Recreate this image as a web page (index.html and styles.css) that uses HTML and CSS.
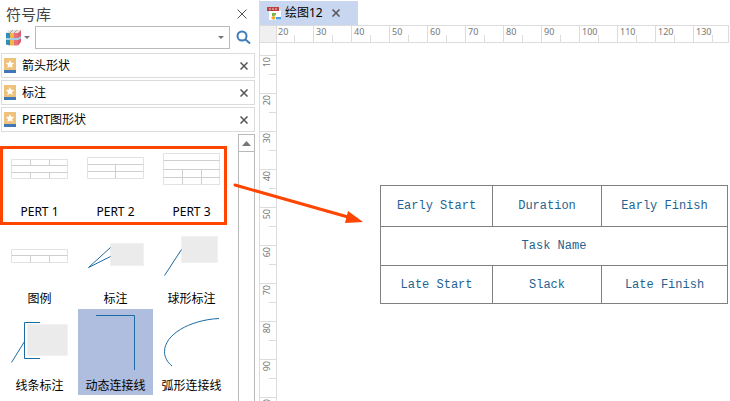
FILE: index.html
```html
<!DOCTYPE html>
<html lang="zh-CN">
<head>
<meta charset="UTF-8">
<meta name="viewport" content="width=device-width, initial-scale=1.0">
<title>绘图12</title>
<link rel="stylesheet" href="styles.css">
</head>
<body>
<div class="app">
  <aside class="panel">
    <header class="panel-head">
      <h1>符号库</h1>
      <button class="close big" aria-label="关闭"><svg width="10" height="10" viewBox="0 0 10 10"><path d="M0.5 0.5L9.5 9.5M9.5 0.5L0.5 9.5"/></svg></button>
    </header>
    <form class="search">
      <button type="button" class="books" aria-label="符号库菜单">
        <svg width="15" height="16" viewBox="0 0 15 16">
          <path d="M0 3L3 0H15L12 3z" fill="#e8e2de"/>
          <path d="M4 3L7 0M8 3L11 0" stroke="#a9a29e" fill="none"/>
          <path d="M0 3h4v12.5l-4-1z" fill="#2f8fb5"/>
          <path d="M4 3h4v12.5h-4z" fill="#f0b74c"/>
          <path d="M8 3h4v12.5h-4z" fill="#e8717c"/>
          <path d="M12 3l3-3v12l-3 3.5z" fill="#dd5f6c"/>
          <path d="M0 9H12L15 7" stroke="#a5cfe6" stroke-width="2" fill="none"/>
        </svg>
        <span class="caret"></span>
      </button>
      <div class="combo">
        <input type="text" aria-label="搜索符号">
        <button type="button" aria-label="展开"><span class="caret"></span></button>
      </div>
      <button type="button" class="find" aria-label="搜索"><svg width="15" height="15" viewBox="0 0 15 15"><circle cx="6" cy="6" r="4.5"/><path d="M9.5 9.5L14 13.5"/></svg></button>
    </form>
    <ul class="libs">
      <li>
        <svg class="star" width="12" height="15" viewBox="0 0 12 15"><path d="M0 0h12v12h-12z" fill="#eec27b"/><path d="M0 12h12v3h-12z" fill="#3f78b5"/><path d="M6 2l1.2 2.8 3 .3-2.2 2 .6 3L6 8.5 3.4 10.1l.6-3-2.2-2 3-.3z" fill="#fff"/></svg>
        <span>箭头形状</span>
        <button class="close" aria-label="关闭"><svg width="8" height="8" viewBox="0 0 8 8"><path d="M0.5 0.5L7.5 7.5M7.5 0.5L0.5 7.5"/></svg></button>
      </li>
      <li>
        <svg class="star" width="12" height="15" viewBox="0 0 12 15"><path d="M0 0h12v12h-12z" fill="#eec27b"/><path d="M0 12h12v3h-12z" fill="#3f78b5"/><path d="M6 2l1.2 2.8 3 .3-2.2 2 .6 3L6 8.5 3.4 10.1l.6-3-2.2-2 3-.3z" fill="#fff"/></svg>
        <span>标注</span>
        <button class="close" aria-label="关闭"><svg width="8" height="8" viewBox="0 0 8 8"><path d="M0.5 0.5L7.5 7.5M7.5 0.5L0.5 7.5"/></svg></button>
      </li>
      <li>
        <svg class="star" width="12" height="15" viewBox="0 0 12 15"><path d="M0 0h12v12h-12z" fill="#eec27b"/><path d="M0 12h12v3h-12z" fill="#3f78b5"/><path d="M6 2l1.2 2.8 3 .3-2.2 2 .6 3L6 8.5 3.4 10.1l.6-3-2.2-2 3-.3z" fill="#fff"/></svg>
        <span>PERT图形状</span>
        <button class="close" aria-label="关闭"><svg width="8" height="8" viewBox="0 0 8 8"><path d="M0.5 0.5L7.5 7.5M7.5 0.5L0.5 7.5"/></svg></button>
      </li>
    </ul>
    <div class="shapes">
      <div class="shape-grid">
        <button class="shape">
          <svg viewBox="0 0 75 68"><path class="frame" d="M9.5 24.5h56v19h-56z"/><path class="rule" d="M9.5 30.5h56M9.5 37.5h56M28.5 24.5v6M47.5 24.5v6M28.5 37.5v6M47.5 37.5v6"/></svg>
          <span>PERT 1</span>
        </button>
        <button class="shape">
          <svg viewBox="0 0 75 68"><path class="frame" d="M9.5 22.5h56v21h-56z"/><path class="rule" d="M9.5 29.5h56M9.5 36.5h56M37.5 29.5v14"/></svg>
          <span>PERT 2</span>
        </button>
        <button class="shape">
          <svg viewBox="0 0 75 68"><path class="frame" d="M9.5 18.5h56v31h-56z"/><path class="rule" d="M9.5 25.5h56M9.5 34.5h56M9.5 42.5h56M28.5 34.5v15M47.5 34.5v15"/></svg>
          <span>PERT 3</span>
        </button>
        <button class="shape">
          <svg viewBox="0 0 75 68"><path class="frame" d="M9.5 27.5h56v13h-56z"/><path class="rule" d="M9.5 33.5h56M28.5 33.5v7M47.5 33.5v7"/></svg>
          <span>图例</span>
        </button>
        <button class="shape">
          <svg viewBox="0 0 75 68"><path class="box" d="M32.5 21.5h33v22h-33z"/><path class="line" d="M32.5 25.5L10.5 45.5L32.5 34.5"/></svg>
          <span>标注</span>
        </button>
        <button class="shape">
          <svg viewBox="0 0 75 68"><path class="box" d="M27.5 14.5h36v26h-36z"/><path class="line" d="M27.5 27.5L10.5 53.5"/></svg>
          <span>球形标注</span>
        </button>
        <button class="shape">
          <svg viewBox="0 0 75 68"><path class="box" d="M25.5 15.5h40v31h-40z"/><path class="line" d="M38 13.5H22.5V49.5H38M22.5 32.5L9.5 53.5"/></svg>
          <span>线条标注</span>
        </button>
        <button class="shape selected">
          <svg viewBox="0 0 75 68"><path class="line" d="M18 6.5H56.5V61"/></svg>
          <span>动态连接线</span>
        </button>
        <button class="shape">
          <svg viewBox="0 0 75 68"><path class="line" d="M65 9.5C35 11 10.5 26 10.5 42.5C10.5 48 13 53 18 57"/></svg>
          <span>弧形连接线</span>
        </button>
      </div>
      <div class="scroll"><button aria-label="向上滚动"><svg width="9" height="5" viewBox="0 0 9 5"><path d="M0 5L4.5 0L9 5z" fill="#777"/></svg></button></div>
    </div>
  </aside>

  <main class="work">
    <nav class="tabs">
      <div class="tab">
        <svg width="15" height="15" viewBox="0 0 15 15">
          <path d="M2 2h9l3 3v9h-12z" fill="#fff"/>
          <path d="M11 2v3h3z" fill="#dcdcdc"/>
          <path d="M0 1h12v4h-12z" fill="#b8433f"/>
          <path d="M2 3h2M5 3h2M8 3h2" stroke="#f3cfcd"/>
          <path d="M5 7h4v2l-2 1h-2z" fill="#7cb342"/>
          <path d="M6.5 9.5l2.5 2.5-2.5 2-2.5-2z" fill="#f5a623"/>
          <path d="M9 11h5v2.5h-5z" fill="#4aa0f0"/>
        </svg>
        <a href="#drawing">绘图12</a>
        <button class="close" aria-label="关闭"><svg width="8" height="8" viewBox="0 0 8 8"><path d="M0.5 0.5L7.5 7.5M7.5 0.5L0.5 7.5"/></svg></button>
      </div>
    </nav>
    <div class="ruler-x">
      <div class="corner"></div>
      <div class="marks">
        <span>20</span><span>30</span><span>40</span><span>50</span><span>60</span><span>70</span><span>80</span><span>90</span><span>100</span><span>110</span><span>120</span><span>130</span>
      </div>
    </div>
    <div class="sheet">
      <div class="ruler-y">
        <div><span>10</span></div><div><span>20</span></div><div><span>30</span></div><div><span>40</span></div><div><span>50</span></div><div><span>60</span></div><div><span>70</span></div><div><span>80</span></div><div><span>90</span></div><div><span>100</span></div>
      </div>
      <div class="canvas" id="drawing">
        <table class="pert">
          <colgroup><col class="c1"><col class="c2"><col class="c3"></colgroup>
          <tr><td>Early Start</td><td>Duration</td><td>Early Finish</td></tr>
          <tr><td colspan="3">Task Name</td></tr>
          <tr><td>Late Start</td><td>Slack</td><td>Late Finish</td></tr>
        </table>
      </div>
    </div>
  </main>

  <div class="highlight"></div>
  <svg class="arrow" width="132" height="44" viewBox="0 0 132 44"><path d="M3 4L116 36" stroke="#ff4500" stroke-width="3" stroke-linecap="round"/><path d="M116 30L131 41L113 42z" fill="#ff4500"/></svg>
</div>
</body>
</html>
```
FILE: styles.css
```css
* {
  box-sizing: border-box;
}
body {
  margin: 0;
  background: #fff;
  color: #000;
  font-family: "Noto Sans", "Noto Sans CJK SC", sans-serif;
  font-size: 12px;
  line-height: 18px;
}
button {
  display: flex;
  align-items: center;
  justify-content: center;
  padding: 0;
  border: none;
  background: none;
  color: inherit;
  font: inherit;
  cursor: pointer;
}
.app {
  position: relative;
  display: flex;
  height: 100vh;
  overflow: hidden;
}

/* symbol library */
.panel {
  display: flex;
  flex-direction: column;
  flex: 0 0 260px;
  min-width: 0;
  border-right: 1px solid #dcdcdc;
}
.panel-head {
  display: flex;
  align-items: center;
  justify-content: space-between;
  height: 26px;
  padding: 2px 12px 0 6px;
}
h1 {
  margin: 0;
  color: #444;
  font-size: 15px;
  font-weight: normal;
}
.close path {
  fill: none;
  stroke: #555;
  stroke-width: 1.5;
}
.close.big path {
  stroke-width: 1;
}
.search {
  display: flex;
  align-items: center;
  height: 23px;
  padding: 0 8px 0 6px;
}
.books {
  gap: 3px;
  width: 29px;
  justify-content: flex-start;
}
.caret {
  border: 3px solid transparent;
  border-top-color: #777;
  border-bottom: none;
}
.combo {
  display: flex;
  flex: 1;
  min-width: 0;
  height: 23px;
  border: 1px solid #b9b9b9;
}
.combo input {
  flex: 1;
  min-width: 0;
  padding: 0 4px;
  border: none;
  outline: none;
  font: inherit;
}
.combo button {
  width: 16px;
}
.find {
  width: 21px;
  justify-content: flex-end;
}
.find svg {
  fill: none;
  stroke: #3f7cbc;
  stroke-width: 2;
}
.libs {
  display: flex;
  flex-direction: column;
  gap: 2px;
  margin: 4px 4px 2px 1px;
  padding: 0;
  list-style: none;
}
.libs li {
  display: flex;
  align-items: center;
  height: 25px;
  padding: 0 6px 0 2px;
  border: 1px solid #dcdcdc;
}
.libs span {
  flex: 1;
  padding-left: 6px;
}

.shapes {
  display: flex;
  flex: 1;
  min-height: 0;
  justify-content: space-between;
  padding-right: 4px;
}
.shape-grid {
  display: grid;
  grid-template-columns: repeat(3, 75px);
  grid-auto-rows: 86px;
  align-content: start;
  gap: 1px;
  padding: 1px 0 0 2px;
}
.shape {
  flex-direction: column;
  justify-content: flex-start;
  white-space: nowrap;
}
.shape svg {
  flex: none;
  width: 75px;
  height: 68px;
  fill: none;
}
.selected {
  background: #afbddf;
}
.frame {
  stroke: #e2e2e2;
}
.rule {
  stroke: #cfcfcf;
}
.box {
  fill: #ebebeb;
  stroke: #f1f1f1;
}
.line {
  stroke: #1b6ca3;
}
.scroll {
  width: 17px;
  border: 1px solid #b9b9b9;
  border-bottom: none;
}
.scroll button {
  width: 100%;
  height: 17px;
  border-bottom: 1px solid #b9b9b9;
}

/* drawing area */
.work {
  display: flex;
  flex: 1;
  flex-direction: column;
  min-width: 0;
}
.tabs {
  display: flex;
  height: 25px;
  padding-top: 1px;
}
.tab {
  display: flex;
  align-items: center;
  padding: 0 18px 0 7px;
  background: #c8d7ef;
}
.tab a {
  padding: 0 9px 0 3px;
  color: #000;
  text-decoration: none;
}
.ruler-x {
  display: flex;
  height: 18px;
  margin-right: 1px;
  border: 1px solid #dcdcdc;
  border-left: none;
  color: #777;
  font-size: 9px;
  line-height: 11px;
}
.corner {
  flex: 0 0 17px;
  border-right: 1px solid #dcdcdc;
  background: #f0f0f0;
}
.marks {
  display: flex;
  flex: 1;
  overflow: hidden;
}
.marks span {
  flex: 0 0 38px;
  padding-left: 2px;
  border-left: 1px solid #dcdcdc;
  background: linear-gradient(#dcdcdc, #dcdcdc) 18px 100% / 1px 7px no-repeat;
}
.marks span:first-child {
  flex-basis: 36px;
  padding-left: 1px;
  border-left: none;
  background-position-x: 17px;
}
.sheet {
  display: flex;
  flex: 1;
  min-height: 0;
}
.ruler-y {
  flex: 0 0 17px;
  padding-top: 12px;
  overflow: hidden;
  border-right: 1px solid #dcdcdc;
  color: #777;
  font-size: 9px;
  line-height: 11px;
}
.ruler-y div {
  height: 38px;
  padding: 1px 0 0 1px;
  border-top: 1px solid #dcdcdc;
  background: linear-gradient(#dcdcdc, #dcdcdc) 100% 18px / 7px 1px no-repeat;
}
.ruler-y span {
  display: block;
  width: 11px;
  writing-mode: vertical-rl;
  transform: rotate(180deg);
}
.canvas {
  flex: 1;
  padding: 142px 0 0 103px;
}
.pert {
  table-layout: fixed;
  width: 348px;
  border-collapse: collapse;
  color: #1f6391;
  font-family: "Liberation Mono", monospace;
  text-align: center;
}
.pert td {
  height: 39px;
  padding: 0;
  border: 1px solid #808080;
}
.pert tr:first-child td {
  height: 41px;
}
.pert tr:last-child td {
  height: 38px;
}
.c1 {
  width: 112px;
}
.c2 {
  width: 109px;
}

/* callout over the PERT shapes */
.highlight {
  position: absolute;
  top: 146px;
  left: 0;
  width: 227px;
  height: 79px;
  border: 3px solid #ff4500;
  pointer-events: none;
}
.arrow {
  position: absolute;
  top: 181px;
  left: 232px;
  fill: none;
  pointer-events: none;
}
```
